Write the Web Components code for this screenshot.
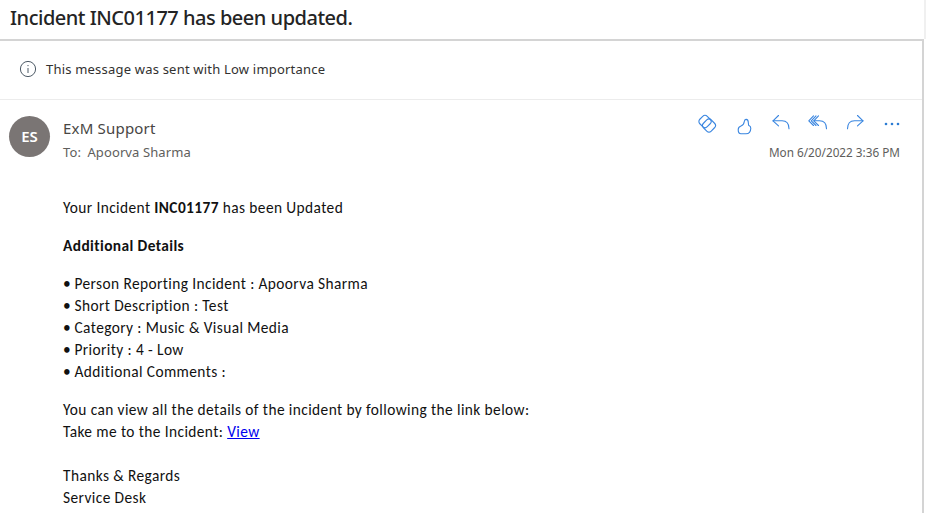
<!DOCTYPE html>
<html>
<head>
<meta charset="utf-8">
<style>
  html, body { margin: 0; padding: 0; background: #fff; }
</style>
</head>
<body>
<mail-view>
  <mail-subject slot="subject">Incident INC01177 has been updated.</mail-subject>
  <mail-notice slot="notice">This message was sent with Low importance</mail-notice>
  <mail-header slot="header" initials="ES" sender="ExM Support" to="Apoorva Sharma" date="Mon 6/20/2022 3:36 PM"></mail-header>
  <mail-body slot="body">
    <p>Your Incident <b>INC01177</b> has been Updated</p>
    <p><b>Additional Details</b></p>
    <ul>
      <li>Person Reporting Incident : Apoorva Sharma</li>
      <li>Short Description : Test</li>
      <li>Category : Music &amp; Visual Media</li>
      <li>Priority : 4 - Low</li>
      <li>Additional Comments :</li>
    </ul>
    <p>You can view all the details of the incident by following the link below:<br>Take me to the Incident: <a href="#">View</a></p>
    <p class="sign">Thanks &amp; Regards<br>Service Desk</p>
  </mail-body>
</mail-view>

<script>
  const UI_FONT = '"Noto Sans", "Open Sans", sans-serif';

  class MailView extends HTMLElement {
    constructor() {
      super();
      this.attachShadow({ mode: "open" });
      this.shadowRoot.innerHTML = `
        <style>
          :host { display: block; width: 926px; height: 513px; overflow: hidden; box-sizing: border-box; }
          .top { height: 39px; border-right: 2px solid #f0f0f0; }
          .pane { width: 924px; height: 474px; box-sizing: border-box; border-top: 2px solid #d4d4d4; border-right: 2px solid #d4d4d4; }
        </style>
        <div class="top"><slot name="subject"></slot></div>
        <div class="pane">
          <slot name="notice"></slot>
          <slot name="header"></slot>
          <slot name="body"></slot>
        </div>
      `;
    }
  }

  class MailSubject extends HTMLElement {
    constructor() {
      super();
      this.attachShadow({ mode: "open" });
      this.shadowRoot.innerHTML = `
        <style>
          :host { display: block; padding: 3px 0 0 10px; font: 500 20px/29px ${UI_FONT}; letter-spacing: -0.49px; color: #242424; white-space: nowrap; }
        </style>
        <slot></slot>
      `;
    }
  }

  class MailNotice extends HTMLElement {
    constructor() {
      super();
      this.attachShadow({ mode: "open" });
      this.shadowRoot.innerHTML = `
        <style>
          :host { display: flex; align-items: center; gap: 9px; height: 59px; box-sizing: border-box; padding: 0 0 2px 19px; border-bottom: 1px solid #ececec; font: 13px/18px ${UI_FONT}; letter-spacing: 0.2px; color: #323130; }
          svg { width: 18px; height: 18px; }
        </style>
        <svg viewBox="0 0 18 18" fill="none" stroke="#4d5a66" stroke-width="1">
          <circle cx="9" cy="9" r="7.6"/>
          <path d="M9 8v5"/>
          <circle cx="9" cy="5.6" r=".7" fill="#4d5a66" stroke="none"/>
        </svg>
        <span><slot></slot></span>
      `;
    }
  }

  class MailActions extends HTMLElement {
    constructor() {
      super();
      this.attachShadow({ mode: "open" });
      this.shadowRoot.innerHTML = `
        <style>
          :host { display: flex; align-items: center; height: 24px; margin-right: -1.5px; }
          svg { width: 20px; height: 20px; margin-left: 17px; overflow: visible; fill: none; stroke: #3a86e0; stroke-width: 1.1; stroke-linecap: round; stroke-linejoin: round; }
          svg:first-child { margin-left: 0; }
        </style>
        <svg viewBox="0 0 20 20" aria-label="Loop">
          <rect x="2.750" y="2.250" width="10.500" height="10.500" rx="3.200" transform="rotate(45 8 7.500)"/>
          <rect x="6.500" y="6" width="11" height="11" rx="3.200" transform="rotate(45 12 11.500)"/>
        </svg>
        <svg viewBox="0 0 20 20" aria-label="Like">
          <path d="M4.200 15.800C4.200 13.500 5.500 12.500 7 12C9 11.300 10 10 10.300 7.500C10.500 5.800 11.200 5.300 12.200 5.400C13.600 5.600 14.300 6.800 14.300 8.500L14.600 11.300C16 12 16.900 12.800 16.800 14.300C16.700 17.200 15.500 19.800 12 19.800L7 19.800C5 19.800 4.200 18 4.200 15.800Z"/>
        </svg>
        <svg viewBox="0 0 20 20" aria-label="Reply">
          <path d="M7.500 1.500L2 6.800l5.500 5"/>
          <path d="M2 6.800h9c4.500 0 7 2.700 7 8"/>
        </svg>
        <svg viewBox="0 0 20 20" aria-label="Reply all">
          <path d="M5.500 1.800L.8 6.800l4.700 4.700"/>
          <path d="M8 1.800L3.300 6.800 8 11.500"/>
          <path d="M10.500 1.800L5.800 6.800l4.700 4.700"/>
          <path d="M5.800 6.800h5.700c4.500 0 7 2.700 7 8"/>
        </svg>
        <svg viewBox="0 0 20 20" aria-label="Forward">
          <path d="M12.500 1.500L18 6.800l-5.500 5"/>
          <path d="M18 6.800H9.500c-4.500 0-7 2.700-7 8"/>
        </svg>
        <svg viewBox="0 0 20 20" aria-label="More" style="stroke:none;fill:#2b7cd3">
          <circle cx="4" cy="10" r="1.300"/><circle cx="10" cy="10" r="1.300"/><circle cx="16" cy="10" r="1.300"/>
        </svg>
      `;
    }
  }

  class MailHeader extends HTMLElement {
    constructor() {
      super();
      this.attachShadow({ mode: "open" });
      this.shadowRoot.innerHTML = `
        <style>
          :host { display: flex; height: 76px; box-sizing: border-box; padding: 16px 22px 0 9px; font-family: ${UI_FONT}; }
          .avatar { width: 41px; height: 41px; border-radius: 50%; background: #7a7574; color: #fff; display: flex; align-items: center; justify-content: center; font: 600 15px/1 ${UI_FONT}; flex: none; }
          .who { margin-left: 13px; flex: 1; color: #484644; }
          .sender { font-size: 15px; line-height: 24px; letter-spacing: 0.2px; }
          .to { font-size: 13px; line-height: 18px; margin-top: 3px; color: #605e5c; letter-spacing: 0.1px; }
          .to span { margin-left: 3px; }
          .side { display: flex; flex-direction: column; align-items: flex-end; margin-top: -4px; }
          .date { font-size: 11.75px; line-height: 16px; color: #605e5c; margin-top: 8px; }
        </style>
        <div class="avatar"></div>
        <div class="who">
          <div class="sender"></div>
          <div class="to">To: <span></span></div>
        </div>
        <div class="side">
          <mail-actions></mail-actions>
          <div class="date"></div>
        </div>
      `;
    }

    connectedCallback() {
      const root = this.shadowRoot;
      root.querySelector(".avatar").textContent = this.getAttribute("initials");
      root.querySelector(".sender").textContent = this.getAttribute("sender");
      root.querySelector(".to span").textContent = this.getAttribute("to");
      root.querySelector(".date").textContent = this.getAttribute("date");
    }
  }

  class MailBody extends HTMLElement {
    constructor() {
      super();
      this.attachShadow({ mode: "open" });
      this.shadowRoot.innerHTML = `
        <style>
          :host { display: block; padding: 21px 20px 0 63px; font: 15.4px/22px Carlito, Lato, sans-serif; letter-spacing: 0.4px; font-variant-ligatures: common-ligatures; color: #111; }
        </style>
        <slot></slot>
      `;
    }
  }

  // body markup is slotted, so its own bits are styled from here
  const bodyStyle = document.createElement("style");
  bodyStyle.textContent = `
    mail-body p { margin: 0 0 16px; }
    mail-body ul { margin: 0 0 16px; padding: 0; list-style: none; }
    mail-body li::before { content: "\\2022"; display: inline-block; width: 11.5px; }
    mail-body a { color: #0000ee; }
    mail-body .sign { margin-top: 22px; }
  `;
  document.head.appendChild(bodyStyle);

  customElements.define("mail-view", MailView);
  customElements.define("mail-subject", MailSubject);
  customElements.define("mail-notice", MailNotice);
  customElements.define("mail-actions", MailActions);
  customElements.define("mail-header", MailHeader);
  customElements.define("mail-body", MailBody);
</script>
</body>
</html>
